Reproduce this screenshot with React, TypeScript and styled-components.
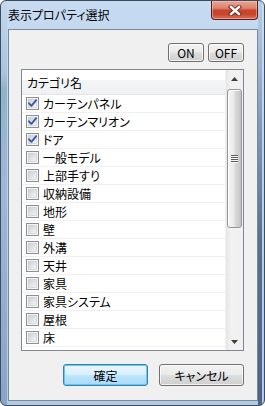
import styled, { createGlobalStyle } from 'styled-components';

const GlobalStyle = createGlobalStyle`
    html, body {
        margin: 0;
        padding: 0;
        background: #ffffff;
    }
    * {
        box-sizing: border-box;
    }
`;

type Item = {
    label: string;
    checked: boolean;
};

const items: Item[] = [
    { label: 'カーテンパネル', checked: true },
    { label: 'カーテンマリオン', checked: true },
    { label: 'ドア', checked: true },
    { label: '一般モデル', checked: false },
    { label: '上部手すり', checked: false },
    { label: '収納設備', checked: false },
    { label: '地形', checked: false },
    { label: '壁', checked: false },
    { label: '外溝', checked: false },
    { label: '天井', checked: false },
    { label: '家具', checked: false },
    { label: '家具システム', checked: false },
    { label: '屋根', checked: false },
    { label: '床', checked: false },
];

const font = `"Noto Sans CJK JP", "Noto Sans", "Liberation Sans", sans-serif`;

const Window = styled.div`
    width: 265px;
    height: 406px;
    display: flex;
    flex-direction: column;
    padding: 0 6px 4px 7px;
    border: 1px solid #3f4c5c;
    border-radius: 6px;
    background:
        linear-gradient(180deg, #b9cfe9 0%, #7f9cbd 30%, #56708f 60%, #4c6584 100%) right 2px top 0 / 4px 100% no-repeat,
        linear-gradient(180deg, #c3d8ef 0%, #a7c3df 18%, #8fb3c9 22%, #9cb9d8 45%, #87a5c6 100%) left 0 top 0 / 6px 100% no-repeat,
        linear-gradient(180deg, #c6daf1 0%, #bcd2ec 40%, #b2cae6 100%);
    font-family: ${font};
    font-feature-settings: "palt";
    overflow: hidden;
`;

const TitleBar = styled.div`
    height: 28px;
    display: flex;
    align-items: flex-start;
    justify-content: space-between;
`;

const Title = styled.span`
    padding-top: 6px;
    font-size: 12px;
    line-height: 16px;
    color: #000000;
`;

const CloseButton = styled.div`
    width: 47px;
    height: 19px;
    display: flex;
    align-items: center;
    justify-content: center;
    border: 1px solid #5a2017;
    border-top: none;
    border-radius: 0 0 4px 4px;
    background: linear-gradient(180deg, #e8a596 0%, #dc826f 40%, #c8432c 52%, #c9472f 75%, #df7259 100%);
    box-shadow: inset 0 0 0 1px rgba(255, 210, 200, 0.45);
`;

const Client = styled.div`
    flex: 1;
    display: flex;
    flex-direction: column;
    padding: 13px 13px 13px 12px;
    border: 1px solid #7a8898;
    background: #f0f0f0;
`;

const ToggleRow = styled.div`
    display: flex;
    justify-content: flex-end;
    gap: 4px;
`;

const Button = styled.button<{ $w: number; $h: number; $primary?: boolean }>`
    width: ${(p) => p.$w}px;
    height: ${(p) => p.$h}px;
    padding: 0;
    margin: 0;
    font-family: ${font};
    font-feature-settings: "palt";
    font-size: 12px;
    color: #000000;
    border-radius: 3px;
    border: 1px solid ${(p) => (p.$primary ? '#3c7fb1' : '#707070')};
    background: ${(p) =>
        p.$primary
            ? 'linear-gradient(180deg, #eaf6fd 0%, #d9f0fc 48%, #bee6fd 52%, #a7d9f5 100%)'
            : 'linear-gradient(180deg, #f2f2f2 0%, #ebebeb 48%, #dddddd 52%, #cfcfcf 100%)'};
    box-shadow: ${(p) =>
        p.$primary ? 'inset 0 0 0 1px #5fcbf3' : 'inset 0 0 0 1px rgba(255, 255, 255, 0.7)'};
`;

const ListBox = styled.div`
    margin-top: 7px;
    height: 282px;
    display: flex;
    border: 1px solid #828790;
    background: #ffffff;
`;

const Rows = styled.div`
    flex: 1;
    display: flex;
    flex-direction: column;
    border-right: 1px solid #f0f0f0;
`;

const Header = styled.div`
    height: 25px;
    display: flex;
    align-items: center;
    padding-left: 5px;
    font-size: 12px;
    color: #000000;
    border-bottom: 1px solid #e5e5e5;
    background: linear-gradient(180deg, #ffffff 0%, #ffffff 40%, #f3f4f6 42%, #f0f1f3 100%);
`;

const Row = styled.div`
    height: 18px;
    display: flex;
    align-items: center;
    gap: 4px;
    padding-left: 4px;
    font-size: 12px;
    color: #000000;
    border-bottom: 1px solid #f0f0f0;
`;

const ScrollBar = styled.div`
    width: 17px;
    display: flex;
    flex-direction: column;
    align-items: center;
    background: linear-gradient(90deg, #e6e6e6 0%, #f2f2f2 30%, #f0f0f0 100%);
`;

const ArrowButton = styled.div`
    height: 17px;
    width: 17px;
    display: flex;
    align-items: center;
    justify-content: center;
`;

const Track = styled.div`
    flex: 1;
    display: flex;
    flex-direction: column;
    align-items: center;
`;

const Thumb = styled.div`
    margin-top: 2px;
    width: 15px;
    height: 139px;
    display: flex;
    flex-direction: column;
    align-items: center;
    justify-content: center;
    gap: 1px;
    border: 1px solid #979797;
    border-radius: 3px;
    background: linear-gradient(90deg, #f4f4f4 0%, #eaeaea 45%, #d9d9d9 55%, #c4c4c4 100%);
    box-shadow: inset 1px 1px 0 #ffffff;
`;

const Grip = styled.span`
    width: 7px;
    height: 1px;
    background: #5e5e5e;
    box-shadow: 0 1px 0 #f4f4f4;
`;

const Footer = styled.div`
    margin-top: 13px;
    display: flex;
    justify-content: flex-end;
    gap: 11px;
`;

const Check = ({ checked }: { checked: boolean }) => (
    <svg width="13" height="13" viewBox="0 0 13 13">
        <defs>
            <linearGradient id="cbg" x1="0" y1="0" x2="1" y2="1">
                <stop offset="0" stopColor="#cbcfd5" />
                <stop offset="1" stopColor="#f7f7f7" />
            </linearGradient>
        </defs>
        <rect x="0.5" y="0.5" width="12" height="12" fill="#f4f4f4" stroke="#8e8f8f" />
        <rect x="2.5" y="2.5" width="8" height="8" fill="url(#cbg)" stroke="#c5c9cf" strokeWidth="0.6" />
        {checked && (
            <path
                d="M3 6.3 L5.4 8.8 L10.2 3.2"
                fill="none"
                stroke="#3b5ba8"
                strokeWidth="1.9"
                strokeLinecap="round"
                strokeLinejoin="round"
            />
        )}
    </svg>
);

const CloseGlyph = () => (
    <svg width="14" height="11" viewBox="0 0 14 11">
        <path d="M3 2 L11 9 M11 2 L3 9" stroke="#6b2419" strokeWidth="4.2" strokeLinecap="square" />
        <path d="M3 2 L11 9 M11 2 L3 9" stroke="#ffffff" strokeWidth="2.4" strokeLinecap="square" />
    </svg>
);

const App = () => {
    return (
        <>
            <GlobalStyle />
            <Window>
                <TitleBar>
                    <Title>表示プロパティ選択</Title>
                    <CloseButton>
                        <CloseGlyph />
                    </CloseButton>
                </TitleBar>
                <Client>
                    <ToggleRow>
                        <Button $w={36} $h={19}>ON</Button>
                        <Button $w={36} $h={19}>OFF</Button>
                    </ToggleRow>
                    <ListBox>
                        <Rows>
                            <Header>カテゴリ名</Header>
                            {items.map((item) => (
                                <Row key={item.label}>
                                    <Check checked={item.checked} />
                                    <span>{item.label}</span>
                                </Row>
                            ))}
                        </Rows>
                        <ScrollBar>
                            <ArrowButton>
                                <svg width="7" height="4" viewBox="0 0 7 4">
                                    <path d="M0 4 L3.5 0 L7 4 Z" fill="#3e3e3e" />
                                </svg>
                            </ArrowButton>
                            <Track>
                                <Thumb>
                                    <Grip />
                                    <Grip />
                                    <Grip />
                                    <Grip />
                                </Thumb>
                            </Track>
                            <ArrowButton>
                                <svg width="7" height="4" viewBox="0 0 7 4">
                                    <path d="M0 0 L7 0 L3.5 4 Z" fill="#3e3e3e" />
                                </svg>
                            </ArrowButton>
                        </ScrollBar>
                    </ListBox>
                    <Footer>
                        <Button $w={85} $h={22} $primary>確定</Button>
                        <Button $w={85} $h={22}>キャンセル</Button>
                    </Footer>
                </Client>
            </Window>
        </>
    );
};

export default App;
